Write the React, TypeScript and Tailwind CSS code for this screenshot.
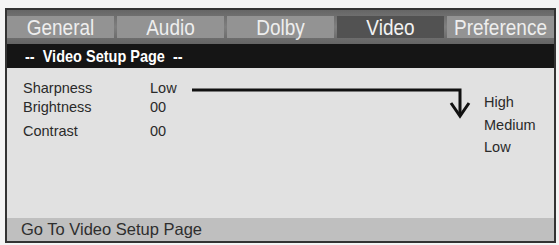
import React from "react";

const tabs = ["General", "Audio", "Dolby", "Video", "Preference"];

export default function App() {
  return (
    <div className="w-[559px] h-[245px] bg-[#f4f4f4] pt-[8px] pl-[5px]" style={{ fontFamily: '"Liberation Sans", Arial, sans-serif' }}>
      <div className="relative w-[551px] h-[235px] border-2 border-[#333333] bg-[#e1e1e1] flex flex-col">
        {/* Tab bar */}
        <div className="h-[34px] bg-gradient-to-b from-[#666666] via-[#7f7f7f] to-[#646464] pt-[6px] pb-[6px] grid grid-cols-5 gap-[3px]">
          {tabs.map((t) => (
            <div
              key={t}
              className={
                "flex items-center justify-center text-[19px] leading-none " +
                (t === "Video" ? "bg-[#525252] text-[#f2f2f2]" : "bg-[#939393] text-[#eeeeee]")
              }
            >
              <span className="inline-block scale-y-[1.15]">{t}</span>
            </div>
          ))}
        </div>
        {/* Header */}
        <div className="h-[24px] bg-[#151515] flex items-center pl-[18px] text-white font-bold text-[14.5px] leading-none">
          <span className="inline-block scale-y-[1.15] whitespace-pre">--  Video Setup Page  --</span>
        </div>
        {/* Content */}
        <div className="flex-1 flex text-[#2a2a2a] text-[14.5px] leading-[17px]">
          <div className="pl-[16px] pt-[12px] w-[143px] flex flex-col">
            <div>Sharpness</div>
            <div className="mt-[2px]">Brightness</div>
            <div className="mt-[7px]">Contrast</div>
          </div>
          <div className="pt-[12px] flex flex-col">
            <div>Low</div>
            <div className="mt-[2px]">00</div>
            <div className="mt-[7px]">00</div>
          </div>
          <div className="ml-auto mr-[18px] pt-[23px] flex flex-col leading-[22.5px] w-[52px]">
            <div>High</div>
            <div>Medium</div>
            <div>Low</div>
          </div>
        </div>
        {/* Footer */}
        <div className="h-[23px] bg-[#bfbfbf] flex items-center pl-[14px] text-[#2e2e2e] text-[16.5px] leading-none">
          Go To Video Setup Page
        </div>
        <svg className="absolute left-[-2px] top-[-2px] pointer-events-none" width="551" height="235" viewBox="0 0 551 235">
          <polyline points="187,82 455,82 455,107" fill="none" stroke="#111" strokeWidth="3" />
          <polyline points="446,95 455,108 464,95" fill="none" stroke="#111" strokeWidth="3" strokeLinejoin="miter" />
        </svg>
      </div>
    </div>
  );
}
